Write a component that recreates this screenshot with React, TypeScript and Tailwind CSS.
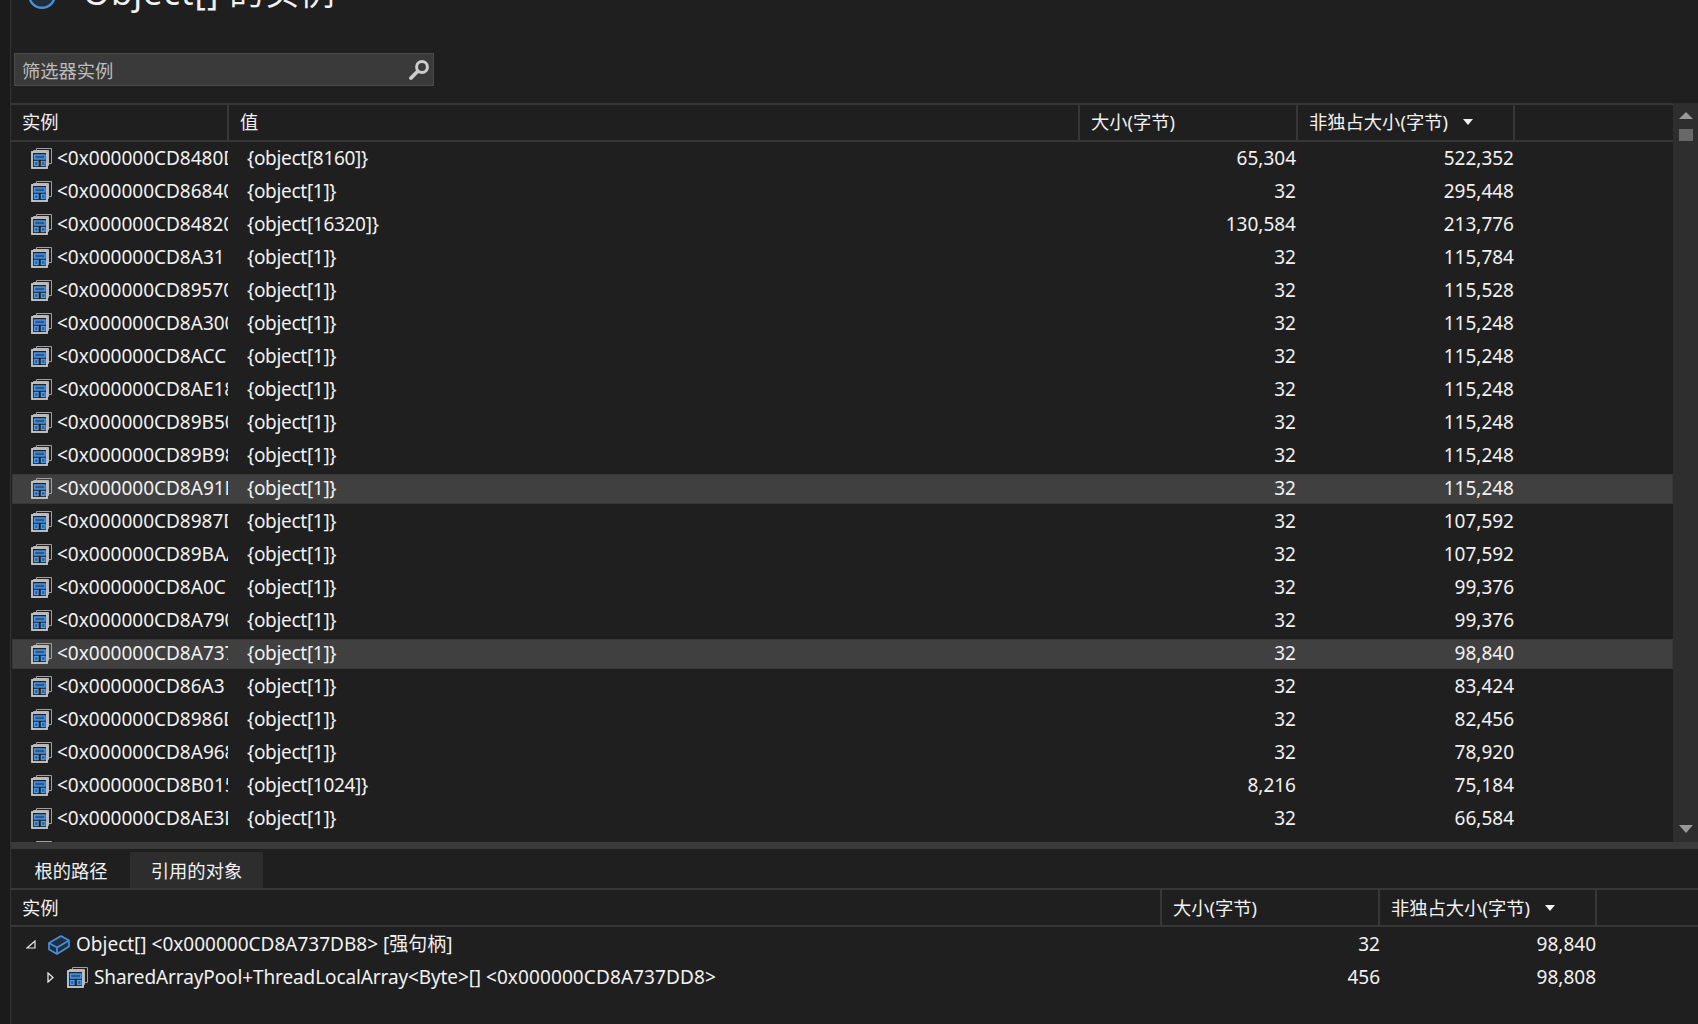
const FONT = "font-['Noto_Sans','Noto_Sans_CJK_SC',sans-serif]";

const rows: [string, string, string, string][] = [
  ["<0x000000CD8480D", "{object[8160]}", "65,304", "522,352"],
  ["<0x000000CD86840", "{object[1]}", "32", "295,448"],
  ["<0x000000CD84820", "{object[16320]}", "130,584", "213,776"],
  ["<0x000000CD8A31", "{object[1]}", "32", "115,784"],
  ["<0x000000CD89570", "{object[1]}", "32", "115,528"],
  ["<0x000000CD8A300", "{object[1]}", "32", "115,248"],
  ["<0x000000CD8ACC", "{object[1]}", "32", "115,248"],
  ["<0x000000CD8AE18", "{object[1]}", "32", "115,248"],
  ["<0x000000CD89B50", "{object[1]}", "32", "115,248"],
  ["<0x000000CD89B98", "{object[1]}", "32", "115,248"],
  ["<0x000000CD8A91D", "{object[1]}", "32", "115,248"],
  ["<0x000000CD8987D", "{object[1]}", "32", "107,592"],
  ["<0x000000CD89BAA", "{object[1]}", "32", "107,592"],
  ["<0x000000CD8A0C", "{object[1]}", "32", "99,376"],
  ["<0x000000CD8A790", "{object[1]}", "32", "99,376"],
  ["<0x000000CD8A737", "{object[1]}", "32", "98,840"],
  ["<0x000000CD86A3", "{object[1]}", "32", "83,424"],
  ["<0x000000CD8986D", "{object[1]}", "32", "82,456"],
  ["<0x000000CD8A968", "{object[1]}", "32", "78,920"],
  ["<0x000000CD8B015", "{object[1024]}", "8,216", "75,184"],
  ["<0x000000CD8AE3D", "{object[1]}", "32", "66,584"],
  ["", "", "", ""],
];

function ArrayIcon() {
  return (
    <svg width="21" height="21" viewBox="0 0 21 21" className="shrink-0">
      <path d="M5.5 2.5V.5h15v15h-3" fill="none" stroke="#a0a0a0" strokeWidth="1" />
      <path d="M2.5 3.5V2.5h15v15h-1" fill="none" stroke="#b8b8b8" strokeWidth="1" />
      <rect x="1" y="4" width="15" height="16" fill="#222222" stroke="#cccccc" strokeWidth="1.8" />
      <rect x="3.5" y="7" width="10.5" height="4" fill="#2a5a90" stroke="#4a9bf0" strokeWidth="1.4" />
      <rect x="3.5" y="13.5" width="3.5" height="4" fill="#2a5a90" stroke="#4a9bf0" strokeWidth="1.4" />
      <rect x="10.5" y="13.5" width="3.5" height="4" fill="#2a5a90" stroke="#4a9bf0" strokeWidth="1.4" />
    </svg>
  );
}

function BoxIcon() {
  return (
    <svg width="22" height="20" viewBox="0 0 22 20" className="shrink-0">
      <path d="M1 8 13 1l8 4.5v6L9 19l-8-4.5z" fill="#1f2f42" stroke="#4a8fdc" strokeWidth="1.7" strokeLinejoin="round" />
      <path d="M1 8l8 4.5L21 5.5M9 12.5V19" fill="none" stroke="#4a8fdc" strokeWidth="1.7" strokeLinejoin="round" />
    </svg>
  );
}

function SortCaret() {
  return (
    <svg width="12" height="8" viewBox="0 0 12 8" className="ml-[14px] shrink-0">
      <path d="M1 1h10L6 7z" fill="#f1f1f1" />
    </svg>
  );
}

function Header({ cols, lower }: { cols: [string, number, boolean][]; lower?: boolean }) {
  return (
    <div className="flex h-[39px] border-y-2 border-[#373737] text-[18.3px] text-[#f1f1f1] shrink-0">
      {cols.map(([label, w, sort], i) => (
        <div key={i} style={{ width: w }} className={`flex items-center pl-[11px] border-r-2 border-[#373737] shrink-0 whitespace-nowrap ${lower ? "" : "pb-[2px]"}`}>
          {label}
          {sort && <SortCaret />}
        </div>
      ))}
    </div>
  );
}

export default function App() {
  return (
    <div className={`${FONT} w-[1698px] h-[1024px] overflow-hidden bg-[#1f1f1f] text-[#f1f1f1] flex`}>
      <div className="w-[11px] bg-[#1b1b1b] border-r border-[#333333] shrink-0" />
      <div className="flex-1 flex flex-col min-w-0">
        {/* title */}
        <div className="h-[53px] shrink-0 overflow-hidden">
          <div className="flex items-center gap-[27px] pl-[17px] -mt-[25px] h-[40px]">
            <svg width="28" height="28" viewBox="0 0 28 28" className="shrink-0">
              <circle cx="14" cy="14" r="12.8" fill="#1f2d3d" stroke="#4a90d9" strokeWidth="2.4" />
            </svg>
            <span className="text-[34.5px] tracking-[1px] leading-none -translate-y-[3px]">Object[] 的实例</span>
          </div>
        </div>
        {/* search */}
        <div className="pl-[3px] h-[50px] shrink-0">
          <div className="w-[420px] h-[33px] bg-[#3a3a3a] border border-[#4b4b4b] flex items-center justify-between pl-[7px] pr-[3px]">
            <span className="text-[18.3px] text-[#bdbdbd] translate-y-[1px]">筛选器实例</span>
            <svg width="22" height="20" viewBox="0 0 22 20">
              <circle cx="14" cy="7" r="5.4" fill="none" stroke="#cccccc" strokeWidth="3" />
              <path d="M9.5 11.5 3 18" stroke="#cccccc" strokeWidth="3.8" strokeLinecap="round" />
            </svg>
          </div>
        </div>
        {/* main list */}
        <div className="flex h-[739px] shrink-0">
          <div className="flex-1 flex flex-col min-w-0">
            <Header cols={[["实例", 218, false], ["值", 851, false], ["大小(字节)", 218, false], ["非独占大小(字节)", 217, true]]} />
            <div className="flex-1 overflow-hidden text-[19px]">
              {rows.map((r, i) => (
                <div key={i} className="h-[33px] flex items-center">
                  <div className={`h-[30px] ml-[1px] w-[1661px] flex items-center ${i === 10 || i === 15 ? "bg-[#404040] outline outline-1 -outline-offset-1 outline-[#383838]" : ""}`}>
                    <div className="w-[216px] pl-[19px] flex items-center gap-[5px] overflow-hidden whitespace-nowrap shrink-0">
                      <ArrayIcon />
                      <span>{r[0]}</span>
                    </div>
                    <div className="w-[850px] pl-[19px] shrink-0 whitespace-nowrap tracking-[-0.3px]">{r[1]}</div>
                    <div className="w-[218px] text-right shrink-0">{r[2]}</div>
                    <div className="w-[218px] text-right shrink-0">{r[3]}</div>
                  </div>
                </div>
              ))}
            </div>
          </div>
          <div className="w-[25px] bg-[#2e2e2e] flex flex-col items-center shrink-0">
            <svg width="14" height="7" viewBox="0 0 14 7" className="mt-[9px] shrink-0"><path d="M0 7 7 0l7 7z" fill="#999999" /></svg>
            <div className="w-[14px] h-[12px] bg-[#686868] mt-[10px] shrink-0" />
            <svg width="14" height="8" viewBox="0 0 14 8" className="mt-auto mb-[9px] shrink-0"><path d="M0 0h14L7 8z" fill="#999999" /></svg>
          </div>
        </div>
        {/* splitter */}
        <div className="h-[7px] bg-[#3a3a3a] shrink-0" />
        {/* tabs */}
        <div className="h-[39px] shrink-0 flex items-end text-[18.3px]">
          <div className="w-[119px] h-[36px] flex items-center justify-center pl-[1px] pt-[2px]">根的路径</div>
          <div className="w-[133px] h-[36px] flex items-center justify-center bg-[#2d2d2d] pt-[2px]">引用的对象</div>
        </div>
        {/* lower table */}
        <Header lower cols={[["实例", 1151, false], ["大小(字节)", 218, false], ["非独占大小(字节)", 217, true]]} />
        <div className="text-[19px] pt-[1px]">
          <div className="h-[33px] flex items-center">
            <div className="w-[1151px] flex items-center pl-[15px] shrink-0">
              <svg width="10" height="9" viewBox="0 0 10 9" className="shrink-0"><path d="M9 1v7H1z" fill="none" stroke="#e8e8e8" strokeWidth="1.2" /></svg>
              <span className="ml-[12px] flex"><BoxIcon /></span>
              <span className="ml-[6px] whitespace-nowrap">Object[] &lt;0x000000CD8A737DB8&gt; [强句柄]</span>
            </div>
            <div className="w-[218px] text-right shrink-0">32</div>
            <div className="w-[216px] text-right shrink-0">98,840</div>
          </div>
          <div className="h-[33px] flex items-center">
            <div className="w-[1151px] flex items-center pl-[36px] shrink-0">
              <svg width="7" height="11" viewBox="0 0 7 11" className="shrink-0"><path d="M1 1l5 4.5L1 10z" fill="none" stroke="#e8e8e8" strokeWidth="1.3" /></svg>
              <span className="ml-[13px] flex"><ArrayIcon /></span>
              <span className="ml-[6px] whitespace-nowrap"><span className="tracking-[-0.11px]">SharedArrayPool+ThreadLocalArray&lt;Byte&gt;[]</span> <span className="tracking-[0.1px]">&lt;0x000000CD8A737DD8&gt;</span></span>
            </div>
            <div className="w-[218px] text-right shrink-0">456</div>
            <div className="w-[216px] text-right shrink-0">98,808</div>
          </div>
        </div>
      </div>
    </div>
  );
}
